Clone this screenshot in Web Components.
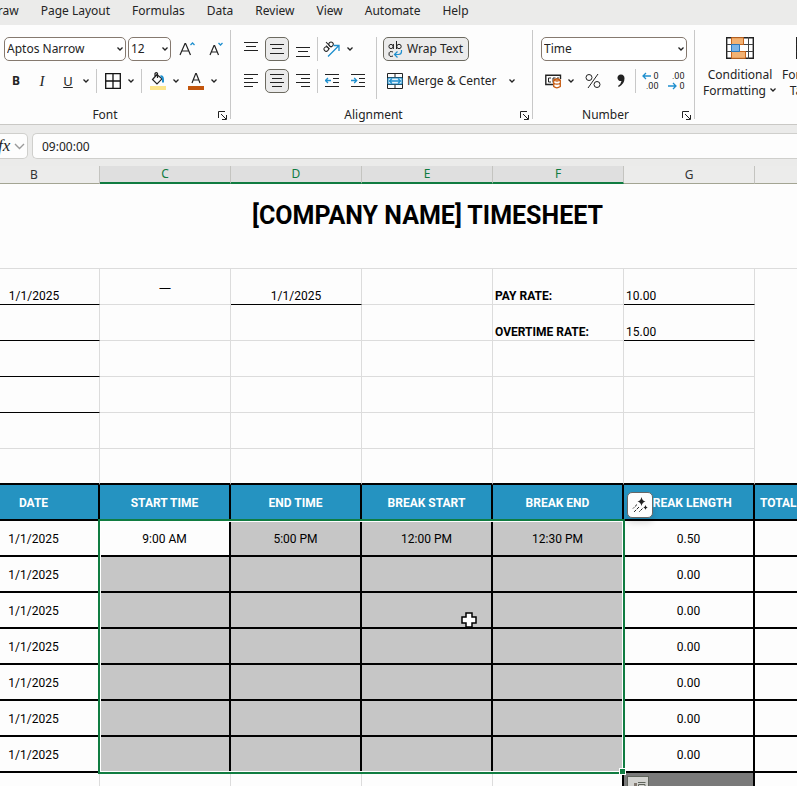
<!DOCTYPE html>
<html lang="en">
<head>
<meta charset="utf-8">
<title>Timesheet</title>
<style>
html, body { margin: 0; height: 100%; }
body { font: 12px/16px "Noto Sans", "Open Sans", sans-serif; color: #242424; background: #ebebea; overflow: hidden; }
</style>
</head>
<body>
<sheet-app></sheet-app>

<script>
const BLUE = '#1f8fce';
const svg = (w, h, body) => `<svg width="${w}" height="${h}" viewBox="0 0 ${w} ${h}" fill="none" stroke="#222" aria-hidden="true">${body}</svg>`;
const lines = (list) => list.map(([x1, x2, y]) => `<path d="M${x1} ${y}.5H${x2}"/>`).join('');

const ICONS = {
  chevron: svg(8, 6, '<path d="M1.500 1.500L4 4l2.500-2.500" stroke-width="1.3"/>'),
  chevronWide: svg(11, 7, '<path d="M1 1l4.500 4.500L10 1" stroke="#9a9a9a" stroke-width="1.400"/>'),
  grow: svg(16, 16, `<path d="M1 14L6 2.500h.6L11.500 14M3 10h7" stroke-width="1.200"/><path d="M11.500 4l2-2 2 2" stroke="${BLUE}" stroke-width="1.300"/>`),
  shrink: svg(16, 16, `<path d="M3 14L7 4.500h.6L11.500 14M4.500 11h5.600" stroke-width="1.200"/><path d="M11.500 2l2 2 2-2" stroke="${BLUE}" stroke-width="1.300"/>`),
  borders: svg(16, 16, '<path d="M.7 .7H15.300V15.300H.7ZM8 1V15M1 8H15" stroke="#111" stroke-width="1.300"/>'),
  fill: svg(16, 18, `<rect y="14" width="16" height="4" fill="#fde58a" stroke="none"/><path d="M7 2.500L2.500 7.500 7 12l5-5.200zM5 4.500V1.500q1.500-1.800 2.500 0V6" stroke-width="1.200"/><path d="M10.500 4.500q3-1 2.500 6" stroke="${BLUE}" stroke-width="2"/>`),
  fontColor: svg(16, 18, '<rect y="14" width="16" height="4" fill="#c2550c" stroke="none"/><path d="M4 11L7.700 1.500h.6L12 11M5.200 8h5.600" stroke-width="1.200"/>'),
  top: svg(14, 16, lines([[0, 14, 1], [2, 12, 5], [0, 14, 9]])),
  middle: svg(14, 16, lines([[0, 14, 3], [2, 12, 7], [0, 14, 12]])),
  bottom: svg(14, 16, lines([[0, 14, 6], [2, 12, 10], [0, 14, 15]])),
  left: svg(14, 16, lines([[0, 14, 1], [0, 9, 5], [0, 14, 9], [0, 9, 13]])),
  center: svg(14, 16, lines([[0, 14, 1], [2, 12, 5], [0, 14, 9], [2, 12, 13]])),
  right: svg(14, 16, lines([[0, 14, 1], [5, 14, 5], [0, 14, 9], [5, 14, 13]])),
  orient: svg(18, 18, `<g transform="rotate(-45 5 8)"><circle cx="3" cy="7.500" r="2.200"/><path d="M5.300 5v5M7.700 2.500V10"/><circle cx="9.800" cy="7.500" r="2.200"/></g><path d="M5 16.500L15.500 6M10.500 5.500H16V11" stroke="${BLUE}" stroke-width="1.300"/>`),
  outdent: svg(14, 16, lines([[0, 14, 1], [8, 14, 5], [8, 14, 9], [0, 14, 13]]) + `<path d="M6 7.500H.8M3 5L.5 7.500 3 10" stroke="${BLUE}" stroke-width="1.300"/>`),
  indent: svg(14, 16, lines([[0, 14, 1], [8, 14, 5], [8, 14, 9], [0, 14, 13]]) + `<path d="M0 7.500H5.500M3.200 5l2.500 2.500L3.200 10" stroke="${BLUE}" stroke-width="1.300"/>`),
  wrap: svg(16, 17, `<circle cx="3" cy="5.500" r="2.100"/><path d="M5.400 3v5M8.500 0v8"/><circle cx="11" cy="5.500" r="2.200"/><path d="M5 11q-4-1.500-4 2t4 2"/><path d="M13.500 9v1.500q0 3-3 3H7M9.500 10.500l-3 3 3 3" stroke="${BLUE}" stroke-width="1.200"/>`),
  merge: svg(16, 16, `<path d="M.5 .5H15.500V15.500H.5ZM.5 4.500H15.500M.5 11.500H15.500M8 .5V4.500M8 11.500V15.500"/><path d="M1 5H15V11H1Z" fill="#e6f3fb" stroke="${BLUE}"/><path d="M2.500 8H13.500M5 5.500L2.500 8 5 10.500M11 5.500L13.500 8 11 10.500" stroke="${BLUE}" stroke-width="1.300"/>`),
  currency: svg(17, 16, `<path d="M8 11.500H.8V2.200H15.500V6" stroke-width="1.400"/><path d="M6 5H3.500V9H6M8 9.500V5h2.500M12 6V5h2" /><path d="M8.700 7v6.500q3 2.600 6.600 0V7q-3.300-2-6.600 0q3.300 2 6.600 0M8.700 10.200q3.300 2 6.600 0" fill="#fff" stroke="#c65a11" stroke-width="1.300"/>`),
  percent: svg(16, 16, '<circle cx="4" cy="4.500" r="3"/><circle cx="12" cy="11.500" r="3"/><path d="M13 1L3 15"/>'),
  comma: svg(10, 16, '<path d="M5 1.500a3.300 3.300 0 1 0 .5 6.500q-.5 3-3.500 5l.8 1Q8.500 11 8.500 5.500 8.500 1.800 5 1.500z" fill="#222" stroke="none"/>'),
  cond: svg(28, 22, '<path d="M.7 .7H27.300V21.300H.7Z" fill="#fff" stroke-width="1.400"/><path d="M.7 7.500H27.300M.7 14.500H27.300M6 0V22M17 0V22M22.500 0V22" stroke="#444"/><path d="M5.500 .7H17.500V7.500H5.500ZM5.500 14.500H19.500V21.300H5.500Z" fill="#f2b273" stroke="#c8641a"/><path d="M13.500 8H22V14H13.500Z" fill="#fff" stroke="none"/><path d="M5.500 7.500H13.500V14.500H5.500Z" fill="#7db4e6" stroke="#2a78bd"/>'),
  format: svg(28, 22, '<path d="M.7 .7H27.300V21.300H.7Z" fill="#fff" stroke-width="1.400"/><path d="M.7 7.500H27.300M.7 14.500H27.300M9.500 0V22M18.500 0V22" stroke="#444"/>'),
  launcher: svg(9, 9, '<path d="M.5 7V.5H7M3 3l5 5M8.500 4V8.500H4"/>'),
  quick: svg(18, 18, '<path d="M10.500 1q.8 4 4 4.500-3.200.5-4 4.500-.8-4-4-4.500 3.200-.5 4-4.500zM14.500 9q.4 2.200 2.200 2.500-1.800.3-2.200 2.500-.4-2.200-2.200-2.500 1.800-.3 2.200-2.500z" fill="#222" stroke="none"/><path d="M6 8.500L2 12.500M8 11l-5.500 5.500M11.500 12.500L8 16" stroke-dasharray="3 1"/>'),
  paste: svg(16, 12, '<path d="M1 5h3V2h3v4h1v3H5l-1 3H1z" fill="#827870" stroke="none"/><path d="M8.500 12V3.500H15V12M8 1.500H15.500M10.500 6.500H13M10.500 9.500H13" stroke="#5f645b"/>'),
  cursor: svg(16, 16, '<path d="M5 1H11V5H15V11H11V15H5V11H1V5H5Z" fill="#fff" stroke="#000" stroke-width="1.500"/>')
};

/* Base class: renders a template string into an open shadow root. */
class View extends HTMLElement {
  connectedCallback() {
    if (this.shadowRoot) return;
    const t = document.createElement('template');
    t.innerHTML = `<style>*{box-sizing:border-box}${this.css()}</style>${this.html()}`;
    this.attachShadow({ mode: 'open' }).append(t.content.cloneNode(true));
  }
}

customElements.define('ui-icon', class extends View {
  css() { return ':host{display:inline-flex;flex:none}svg{display:block}'; }
  html() { return ICONS[this.getAttribute('name')]; }
});

customElements.define('tool-button', class extends View {
  css() {
    return `:host{display:block;flex:none}
      button{display:flex;align-items:center;justify-content:center;gap:4px;width:100%;min-width:24px;height:24px;padding:0;border:1px solid transparent;border-radius:5px;background:none;font:inherit;color:inherit;white-space:nowrap}
      :host([narrow]) button{min-width:12px;width:12px}
      :host([wide]) button{padding:0 4px 0 3px}
      :host([pressed]) button{background:#ebebeb;border-color:#6c6a60}
      :host([pressed][wide]) button{gap:3px;padding:0 5px 0 4px}`;
  }
  html() {
    const icon = this.getAttribute('icon');
    return `<button type="button" aria-label="${this.getAttribute('label')}">${icon ? `<ui-icon name="${icon}"></ui-icon>` : ''}<slot></slot></button>`;
  }
});

customElements.define('drop-down', class extends View {
  css() {
    return `:host{display:grid;align-items:center;flex:none}
      select,ui-icon{grid-area:1/1}
      select{appearance:none;width:100%;height:24px;padding:0 0 0 2px;border:1px solid #85796f;border-radius:5px;background:#fff;font:inherit;color:inherit}
      ui-icon{justify-self:end;margin-right:2px;pointer-events:none}`;
  }
  html() {
    return `<select aria-label="${this.getAttribute('label')}"><option>${this.getAttribute('value')}</option></select><ui-icon name="chevron"></ui-icon>`;
  }
});

customElements.define('ribbon-group', class extends View {
  css() {
    return `:host{display:flex;flex-direction:column;flex:none;padding-top:12px}
      .body{height:62px;padding-left:8px}
      footer{display:grid;grid-template-columns:1fr 16px;align-items:center;height:16px;margin-top:8px;text-align:center}
      button{justify-self:end;margin-right:3px;padding:0;border:0;background:none;height:9px;width:9px}
      button ui-icon{display:flex}`;
  }
  html() {
    const l = this.getAttribute('label');
    return `<div class="body"><slot></slot></div><footer><span>${l}</span><button type="button" aria-label="${l} settings"><ui-icon name="launcher"></ui-icon></button></footer>`;
  }
});

customElements.define('ribbon-tabs', class extends View {
  css() {
    return `:host{display:block;height:25px}
      nav{display:flex;gap:22px;margin-left:-11px;padding-top:3px}
      a{color:inherit;text-decoration:none;white-space:nowrap}`;
  }
  html() {
    return `<nav>${['Draw', 'Page Layout', 'Formulas', 'Data', 'Review', 'View', 'Automate', 'Help'].map(t => `<a href="#">${t}</a>`).join('')}</nav>`;
  }
});

const chev = (l) => `<tool-button narrow icon="chevron" label="${l}"></tool-button>`;

customElements.define('ribbon-panel', class extends View {
  css() {
    return `:host{display:flex;height:100px;background:#fdfdfd;border-bottom:1px solid #c9c8c5;overflow:hidden}
      .row{display:flex;align-items:center;gap:2px;height:24px;--m:0px}
      .sep{flex:none;width:1px;height:24px;margin:0 var(--m);background:#c8c8c8}
      .split{display:flex}
      .rule{flex:none;width:1px;margin:5px 0;background:#c8c8c8}
      .stack{display:flex;flex-direction:column;gap:8px}
      .font{width:234px;margin-left:-4px}
      .align{width:301px}
      .cols{display:flex;height:62px}
      .cols>.sep{height:62px;margin:0 6px}
      .num{width:161px}
      b{font-weight:700} u{font-size:13px} i{font-family:"Liberation Serif",serif;font-size:15px}
      .big{display:flex;flex:none;flex-direction:column;align-items:center;gap:8px;height:80px;margin-top:12px;padding:0;border:0;background:none;font:inherit;color:inherit;line-height:16px;white-space:nowrap}
      .big:first-of-type{margin-left:8px}
      .big+.big{margin-left:5px}
      .big span ui-icon{vertical-align:2px;margin-left:3px}`;
  }
  html() {
    return `
    <ribbon-group class="font" label="Font"><div class="stack">
      <div class="row"><drop-down style="width:122px" label="Font name" value="Aptos Narrow"></drop-down><drop-down style="width:43px" label="Font size" value="12"></drop-down>
        <tool-button icon="grow" label="Grow font" style="width:28px"></tool-button><tool-button icon="shrink" label="Shrink font"></tool-button></div>
      <div class="row" style="--m:2px"><tool-button label="Bold"><b>B</b></tool-button><tool-button label="Italic"><i>I</i></tool-button>
        <div class="split"><tool-button label="Underline"><u>U</u></tool-button>${chev('Underline style')}</div><span class="sep"></span>
        <div class="split"><tool-button icon="borders" label="Borders"></tool-button>${chev('Border style')}</div><span class="sep"></span>
        <div class="split"><tool-button icon="fill" label="Fill color"></tool-button>${chev('Fill colors')}</div>
        <div class="split"><tool-button icon="fontColor" label="Font color"></tool-button>${chev('Font colors')}</div></div>
    </div></ribbon-group>
    <span class="rule"></span>
    <ribbon-group class="align" label="Alignment"><div class="cols">
      <div class="stack">
        <div class="row"><tool-button icon="top" label="Top align"></tool-button><tool-button pressed icon="middle" label="Middle align"></tool-button><tool-button icon="bottom" label="Bottom align"></tool-button><span class="sep"></span>
          <div class="split"><tool-button icon="orient" label="Orientation"></tool-button>${chev('Orientations')}</div></div>
        <div class="row"><tool-button icon="left" label="Align left"></tool-button><tool-button pressed icon="center" label="Center"></tool-button><tool-button icon="right" label="Align right"></tool-button><span class="sep"></span>
          <tool-button icon="outdent" label="Decrease indent"></tool-button><tool-button icon="indent" label="Increase indent"></tool-button></div>
      </div><span class="sep"></span>
      <div class="stack">
        <div class="row"><tool-button wide pressed icon="wrap" label="Wrap Text">Wrap Text</tool-button></div>
        <div class="row" style="gap:4px"><tool-button wide icon="merge" label="Merge &amp; Center">Merge &amp; Center</tool-button>${chev('Merge options')}</div>
      </div></div></ribbon-group>
    <span class="rule"></span>
    <ribbon-group class="num" label="Number"><div class="stack">
      <div class="row"><drop-down style="width:146px" label="Number format" value="Time"></drop-down></div>
      <div class="row"><div class="split"><tool-button icon="currency" label="Accounting format"></tool-button>${chev('Currencies')}</div>
        <tool-button icon="percent" label="Percent" style="width:28px"></tool-button><tool-button icon="comma" label="Comma style"></tool-button><span class="sep"></span>
        <tool-button label="Increase decimal"><decimal-mark dir="left" a="0" b=".00"></decimal-mark></tool-button><tool-button label="Decrease decimal"><decimal-mark dir="right" a=".00" b="0"></decimal-mark></tool-button></div>
    </div></ribbon-group>
    <span class="rule"></span>
    <button type="button" class="big"><ui-icon name="cond"></ui-icon><span>Conditional<br>Formatting<ui-icon name="chevron"></ui-icon></span></button>
    <button type="button" class="big"><ui-icon name="format"></ui-icon><span>Format as<br>Table<ui-icon name="chevron"></ui-icon></span></button>`;
  }
});

/* Two stacked decimals with an arrow beside the shorter one. */
customElements.define('decimal-mark', class extends View {
  css() {
    return `:host{display:grid;width:17px;font:9px/10px Roboto,sans-serif}
      div{display:flex;justify-content:flex-end;align-items:center;gap:1px;height:10px}`;
  }
  html() {
    const left = this.getAttribute('dir') === 'left';
    const arrow = svg(10, 8, `<path d="${left ? 'M9 4H1M4 1L1 4l3 3' : 'M0 4H8M5 1l3 3-3 3'}" stroke="${BLUE}" stroke-width="1.300"/>`);
    return `<div>${left ? arrow : ''}${this.getAttribute('a')}</div><div>${left ? '' : arrow}${this.getAttribute('b')}</div>`;
  }
});

customElements.define('formula-bar', class extends View {
  css() {
    return `:host{display:flex;gap:4px;padding:8px 0 7px;background:#ebebea}
      button{display:flex;align-items:center;gap:4px;width:30px;margin-left:-2px;height:26px;padding:0;border:1px solid #cfcfcc;border-left:0;border-radius:0 5px 5px 0;background:#fdfdfd;color:#222;font:italic 17px "Liberation Serif",serif}
      input{flex:1;min-width:0;height:26px;padding:0 9px;border:1px solid #cfcfcc;border-right:0;border-radius:5px 0 0 5px;background:#fdfdfd;font:inherit;color:#222}`;
  }
  html() { return '<button type="button" aria-label="Insert function">fx<ui-icon name="chevronWide"></ui-icon></button><input aria-label="Formula" value="09:00:00">'; }
});

customElements.define('sheet-grid', class extends View {
  css() {
    return `:host{display:block;position:relative;flex:1;overflow:hidden;background:#fdfdfd;font-family:Roboto,"Noto Sans",sans-serif;color:#000}
      table{width:calc(100% + 31px);min-width:1000px;margin-left:-31px;table-layout:fixed;border-collapse:separate;border-spacing:0}
      col{width:131px} col:last-child{width:auto}
      th,td{height:36px;padding:2px 2px 0;border:0 solid #dcdcdc;border-width:0 1px 1px 0;text-align:center;white-space:nowrap;overflow:hidden}
      .letters th{height:18px;padding:0;background:#ececeb;border-color:#c4c4c0;border-bottom-color:#a3a593;font:400 12px/14px "Noto Sans",sans-serif;color:#333}
      .letters .on{background:#dfdfdf;border-bottom:2px solid #107c41;color:#107c41}
      .title th{height:85px;padding-top:17px;border-right:0;vertical-align:top;font:700 25px/30px Roboto,sans-serif}
      .info td,.info th{vertical-align:bottom;padding-bottom:0;line-height:15px}
      .info .mid{vertical-align:middle;font-family:"Noto Sans",sans-serif}
      .info th,.info .l{text-align:left}
      .info .line{border-bottom-color:#000}
      .info :nth-child(n+7){border-color:#fdfdfd}
      .info.edge td{border-bottom:2px solid #000}
      .head th{background:#2593c1;color:#fff;font-weight:700;border:0 solid #000;border-width:0 2px 2px 0}
      .head .l{text-align:left;padding-left:5px}
      .data td{border-color:#000;border-width:0 2px 2px 0}
      .data .sel{background:#c6c6c6}
      .below .grey{background:#7a7a7a;border-color:#000;border-width:0 2px 0 0}
      .below .pre{border-right:2px solid #000}
      .selection{position:absolute;left:98px;top:353px;width:527px;height:255px;border:2px solid #107c41;box-shadow:inset 0 0 0 1px #fff;pointer-events:none}
      .handle{position:absolute;right:-3px;bottom:-3px;width:7px;height:7px;border:1px solid #fff;background:#107c41}
      .quick{position:absolute;left:627px;top:326px;display:grid;place-items:center;width:26px;height:26px;padding:0;border:1px solid #666;border-radius:5px;background:#fdfdfd;box-shadow:0 5px 6px #0002}
      .paste{position:absolute;left:627px;top:610px;display:grid;place-items:center;width:22px;height:22px;padding:0;border:1px solid #5f645b;background:#d3d3d0}
      .cursor{position:absolute;left:461px;top:446px}`;
  }
  html() {
    const row = (cls, cells) => `<tr class="${cls}">${cells.join('')}</tr>`;
    const td = (t = '', c = '') => `<td${c ? ` class="${c}"` : ''}>${t}</td>`;
    const letters = [...'BCDEFGH'].map(l => `<th scope="col"${'CDEF'.includes(l) ? ' class="on"' : ''}>${l}</th>`).concat('<th></th>');
    const info = (b, c, d, f, g, lb, ld, lg) => row('info', [td(b, lb ? 'line' : ''), td(c, 'mid'), td(d, ld ? 'line' : ''), td(), f ? `<th scope="row">${f}</th>` : td(), td(g, lg ? 'l line' : ''), td(), td()]);
    const times = [['9:00 AM', '5:00 PM', '12:00 PM', '12:30 PM', '0.50']];
    const data = Array.from({ length: 7 }, (_, i) => {
      const [s = '', e = '', bs = '', be = '', len = '0.00'] = times[i] || [];
      return row('data', [td('1/1/2025'), td(s, i ? 'sel' : ''), td(e, 'sel'), td(bs, 'sel'), td(be, 'sel'), td(len), td(), td()]);
    });
    return `<table><colgroup>${'<col>'.repeat(8)}</colgroup>
      <thead>${row('letters', letters)}</thead>
      <tbody>
      ${row('title', ['<th colspan="7">[COMPANY NAME] TIMESHEET</th>', '<th></th>'])}
      ${info('1/1/2025', '—', '1/1/2025', 'PAY RATE:', '10.00', 1, 1, 1)}
      ${info('', '', '', 'OVERTIME RATE:', '15.00', 1, 0, 1)}
      ${info('', '', '', '', '', 1)}
      ${info('', '', '', '', '', 1)}
      ${info('', '', '', '', '')}
      ${row('info edge', Array(8).fill(td()))}
      ${row('head', ['DATE', 'START TIME', 'END TIME', 'BREAK START', 'BREAK END', 'BREAK LENGTH'].map(t => `<th scope="col">${t}</th>`).concat('<th scope="col" class="l">TOTAL</th>', '<th></th>'))}
      ${data.join('')}
      ${row('below', [td(), td(), td(), td(), td('', 'pre'), td('', 'grey'), td(), td()])}
      </tbody></table>
      <div class="selection"><span class="handle"></span></div>
      <button type="button" class="quick" aria-label="Quick analysis"><ui-icon name="quick"></ui-icon></button>
      <button type="button" class="paste" aria-label="Paste options"><ui-icon name="paste"></ui-icon></button>
      <ui-icon class="cursor" name="cursor"></ui-icon>`;
  }
});

customElements.define('sheet-app', class extends View {
  css() { return ':host{display:flex;flex-direction:column;height:100vh;overflow:hidden}'; }
  html() { return '<ribbon-tabs></ribbon-tabs><ribbon-panel></ribbon-panel><formula-bar></formula-bar><sheet-grid></sheet-grid>'; }
});
</script>
</body>
</html>
